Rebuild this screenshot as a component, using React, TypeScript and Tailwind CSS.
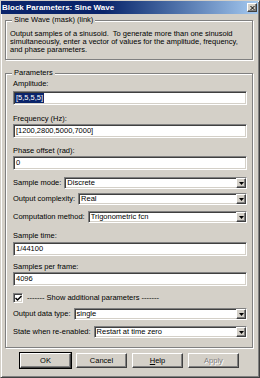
import React from 'react';

// Windows 2000 style "Block Parameters: Sine Wave" dialog

const sunken =
  'border border-t-[#808080] border-l-[#808080] border-r-white border-b-white shadow-[inset_1px_1px_0_#404040,inset_-1px_-1px_0_#d4d0c8]';
const raised =
  'border border-t-white border-l-white border-r-[#404040] border-b-[#404040] shadow-[inset_-1px_-1px_0_#808080]';

function Label({ children, className = '' }: { children: React.ReactNode; className?: string }) {
  return <div className={`leading-[10px] h-[10px] whitespace-nowrap ${className}`}>{children}</div>;
}

function TextField({ value, selected = false }: { value: string; selected?: boolean }) {
  return (
    <div className={`h-[14px] bg-white ${sunken} flex items-center pl-[1px]`}>
      {selected ? (
        <span className="bg-[#0a246a] text-white leading-[10px] px-[1px]">{value}</span>
      ) : (
        <span className="leading-[10px] pl-[1px]">{value}</span>
      )}
    </div>
  );
}

function Dropdown({ label, value, className = '' }: { label: string; value: string; className?: string }) {
  return (
    <div className={`flex items-center gap-[3px] h-[12px] ${className}`}>
      <span className="whitespace-nowrap leading-[10px]">{label}</span>
      <div className={`flex-1 h-full bg-white ${sunken} flex items-center`}>
        <span className="flex-1 pl-[2px] leading-[10px]">{value}</span>
        <span className={`w-[10px] h-[10px] bg-[#d4d0c8] ${raised} flex items-center justify-center`}>
          <svg width="5" height="3" viewBox="0 0 5 3">
            <path d="M0 0H5L2.5 3Z" fill="#000" />
          </svg>
        </span>
      </div>
    </div>
  );
}

function Group({ title, children, className = '' }: { title: string; children: React.ReactNode; className?: string }) {
  return (
    <div
      className={`relative border border-[#808080] shadow-[inset_1px_1px_0_white,1px_1px_0_white] ${className}`}
    >
      <span className="absolute -top-[6px] left-[6px] bg-[#d4d0c8] px-[2px] leading-[10px]">{title}</span>
      {children}
    </div>
  );
}

function Button({ children, isDefault = false, disabled = false }: { children: React.ReactNode; isDefault?: boolean; disabled?: boolean }) {
  return (
    <div
      className={`w-[51px] h-[15px] flex items-center justify-center ${
        isDefault ? 'outline outline-1 outline-black' : ''
      } ${raised} ${disabled ? 'text-[#808080] [text-shadow:1px_1px_0_white]' : ''}`}
    >
      <span className="leading-[10px]">{children}</span>
    </div>
  );
}

export default function App() {
  return (
    <div className="w-[260px] h-[378px] bg-[#d4d0c8] border border-t-[#d4d0c8] border-l-[#d4d0c8] border-r-[#404040] border-b-[#404040] shadow-[inset_1px_1px_0_white,inset_-1px_-1px_0_#808080] font-['Liberation_Sans',Arial,sans-serif] text-[7.5px] text-black overflow-hidden">
      {/* Title bar */}
      <div className="h-[13px] mr-[1px] bg-linear-to-r from-[#0a246a] from-40% to-[#a6caf0] flex items-center pl-[1px] pr-[1px]">
        <span className="flex-1 text-white font-bold text-[8px] leading-[10px] whitespace-nowrap">
          Block Parameters: Sine Wave
        </span>
        <span className={`w-[10px] h-[9px] bg-[#d4d0c8] ${raised} flex items-center justify-center`}>
          <svg width="5" height="4" viewBox="0 0 5 4">
            <path d="M0.5 0L4.5 4M4.5 0L0.5 4" stroke="#000" strokeWidth="1" />
          </svg>
        </span>
      </div>

      <div className="pl-[4px] pr-[6px]">
        {/* Description */}
        <Group title="Sine Wave (mask) (link)" className="mt-[6px] pt-[9px] pb-[5px] pl-[4px] pr-[4px]">
          <p className="leading-[8px]">
            Output samples of a sinusoid.&nbsp; To generate more than one sinusoid simultaneously, enter a vector of
            values for the amplitude, frequency, and phase parameters.
          </p>
        </Group>

        {/* Parameters */}
        <Group title="Parameters" className="mt-[13px] pt-[5px] pb-[9px] pl-[7px] pr-[5px]">
          <Label>Amplitude:</Label>
          <div className="mt-[2px]">
            <TextField value="[5,5,5,5]" selected />
          </div>

          <Label className="mt-[9px]">Frequency (Hz):</Label>
          <TextField value="[1200,2800,5000,7000]" />

          <Label className="mt-[8px]">Phase offset (rad):</Label>
          <TextField value="0" />

          <Dropdown label="Sample mode:" value="Discrete" className="mt-[7px]" />
          <Dropdown label="Output complexity:" value="Real" className="mt-[4px]" />
          <Dropdown label="Computation method:" value="Trigonometric fcn" className="mt-[6px]" />

          <Label className="mt-[8px]">Sample time:</Label>
          <div className="mt-[1px]">
            <TextField value="1/44100" />
          </div>

          <Label className="mt-[6px]">Samples per frame:</Label>
          <TextField value="4096" />

          <div className="mt-[7px] h-[10px] flex items-center gap-[4px]">
            <span className={`w-[10px] h-[10px] bg-white ${sunken} flex items-center justify-center`}>
              <svg width="7" height="7" viewBox="0 0 7 7">
                <path d="M0.5 3L2.5 5L6.5 1" stroke="#000" strokeWidth="1.5" fill="none" />
              </svg>
            </span>
            <span className="leading-[10px] whitespace-nowrap">------- Show additional parameters -------</span>
          </div>

          <Dropdown label="Output data type:" value="single" className="mt-[5px]" />
          <Dropdown label="State when re-enabled:" value="Restart at time zero" className="mt-[6px]" />
        </Group>

        {/* Buttons */}
        <div className="mt-[5px] pl-[15px] flex gap-[5px]">
          <Button isDefault>OK</Button>
          <Button>Cancel</Button>
          <Button>
            <span className="underline">H</span>elp
          </Button>
          <Button disabled>Apply</Button>
        </div>
      </div>
    </div>
  );
}
